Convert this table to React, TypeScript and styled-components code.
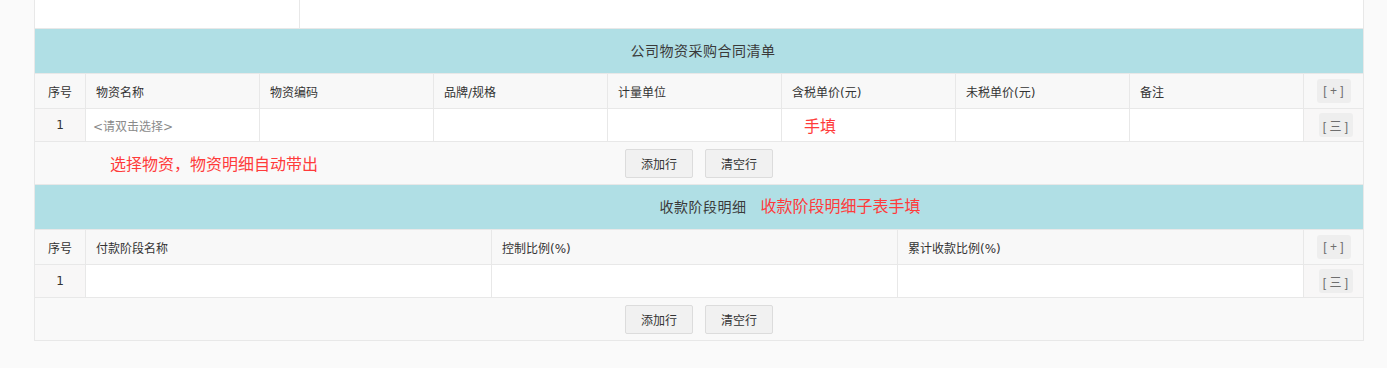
import React from 'react'
import styled, {createGlobalStyle} from 'styled-components'

const GlobalStyle = createGlobalStyle`
  html, body {
    margin: 0;
    padding: 0;
    background: #fafafa;
    font-family: "DejaVu Sans", "Noto Sans CJK SC", sans-serif;
    font-size: 12px;
    color: #333;
  }
  * {
    box-sizing: border-box;
  }
`

const Page = styled.div`
  width: 1387px;
  height: 368px;
  padding-left: 34px;
  background: #fafafa;
`

const Panel = styled.div`
  width: 1330px;
  border-left: 1px solid #e8e8e8;
  border-right: 1px solid #e8e8e8;
  border-bottom: 1px solid #e8e8e8;
  background: #fff;
`

const TopStrip = styled.div`
  display: grid;
  grid-template-columns: 265px 1fr;
  height: 29px;
  border-bottom: 1px solid #e8e8e8;

  > div:first-child {
    border-right: 1px solid #e8e8e8;
  }
`

// the second title sits under a toolbar, so it carries its own divider line
const SectionTitle = styled.div<{ $divided?: boolean }>`
  height: ${p => (p.$divided ? 45 : 44)}px;
  border-top: ${p => (p.$divided ? '1px solid #e8e8e8' : 'none')};
  background: #b0dfe5;
  display: flex;
  align-items: center;
  justify-content: center;
  padding-left: 8px;
  font-size: 14px;
  letter-spacing: 0.5px;
  color: #3a3a3a;
`

const TitleText = styled.span`
  position: relative;
  line-height: 1;
`

const TitleNote = styled.span`
  position: absolute;
  left: calc(100% + 14px);
  top: 50%;
  transform: translateY(-50%);
  white-space: nowrap;
  font-size: 16px;
  letter-spacing: 0;
  color: #ff3b3b;
`

const Row = styled.div<{ $cols: string; $height: number; $head?: boolean }>`
  display: grid;
  grid-template-columns: ${p => p.$cols};
  height: ${p => p.$height}px;
  border-top: 1px solid #e8e8e8;
  background: ${p => (p.$head ? '#f8f8f8' : '#fff')};
`

const Cell = styled.div<{ $center?: boolean; $grey?: boolean; $pad?: number }>`
  display: flex;
  align-items: center;
  justify-content: ${p => (p.$center ? 'center' : 'flex-start')};
  padding-left: ${p => (p.$center ? 0 : p.$pad ?? 10)}px;
  border-right: 1px solid #e8e8e8;
  background: ${p => (p.$grey ? '#f8f7f7' : 'transparent')};
  white-space: nowrap;
  overflow: hidden;

  &:last-child {
    border-right: none;
  }
`

const Placeholder = styled.span`
  color: #8a8a8a;
`

const Hint = styled.span`
  font-size: 16px;
  color: #ff3b3b;
`

const IconButton = styled.span<{ $shift?: number }>`
  display: inline-flex;
  align-items: center;
  justify-content: center;
  width: 34px;
  height: 24px;
  margin-left: ${p => p.$shift ?? 0}px;
  border-radius: 3px;
  background: #eeeeee;
  color: #6e6e6e;
  font-size: 12px;
  font-family: "Liberation Sans", "Noto Sans CJK SC", sans-serif;
  white-space: pre;
`

const Toolbar = styled.div`
  position: relative;
  height: 43px;
  border-top: 1px solid #e8e8e8;
  background: #f9f9f9;
  display: flex;
  align-items: center;
  justify-content: center;
  gap: 12px;
`

const ToolNote = styled.span`
  position: absolute;
  left: 75px;
  top: 50%;
  transform: translateY(-50%);
  font-size: 16px;
  color: #ff3b3b;
`

const Button = styled.button`
  width: 68px;
  height: 29px;
  padding: 0;
  border: 1px solid #dcdcdc;
  border-radius: 2px;
  background: #f1f1f1;
  color: #333;
  font-family: "Noto Sans CJK SC", sans-serif;
  font-size: 12px;
  cursor: pointer;
`

const materialCols = '51px repeat(7, 174px) 1fr'
const payCols = '51px repeat(3, 406px) 1fr'

const materialHeads = ['物资名称', '物资编码', '品牌/规格', '计量单位', '含税单价(元)', '未税单价(元)', '备注']
const payHeads = ['付款阶段名称', '控制比例(%)', '累计收款比例(%)']

const Tools = ({note}: { note?: string }) => (
  <Toolbar>
    {note && <ToolNote>{note}</ToolNote>}
    <Button>添加行</Button>
    <Button>清空行</Button>
  </Toolbar>
)

export default function App() {
  return (
    <Page>
      <GlobalStyle />
      <Panel>
        <TopStrip>
          <div />
          <div />
        </TopStrip>

        <SectionTitle>
          <TitleText>公司物资采购合同清单</TitleText>
        </SectionTitle>
        <Row $cols={materialCols} $height={35} $head>
          <Cell $center>序号</Cell>
          {materialHeads.map(h => (
            <Cell key={h}>{h}</Cell>
          ))}
          <Cell $center>
            <IconButton>{'[ + ]'}</IconButton>
          </Cell>
        </Row>
        <Row $cols={materialCols} $height={33}>
          <Cell $center $grey>1</Cell>
          <Cell $pad={7}>
            <Placeholder>{'<请双击选择>'}</Placeholder>
          </Cell>
          <Cell />
          <Cell />
          <Cell />
          <Cell $pad={22}>
            <Hint>手填</Hint>
          </Cell>
          <Cell />
          <Cell />
          <Cell $center $grey>
            <IconButton $shift={4}>{'[ 三 ]'}</IconButton>
          </Cell>
        </Row>
        <Tools note="选择物资，物资明细自动带出" />

        <SectionTitle $divided>
          <TitleText>
            收款阶段明细
            <TitleNote>收款阶段明细子表手填</TitleNote>
          </TitleText>
        </SectionTitle>
        <Row $cols={payCols} $height={35} $head>
          <Cell $center>序号</Cell>
          {payHeads.map(h => (
            <Cell key={h}>{h}</Cell>
          ))}
          <Cell $center>
            <IconButton>{'[ + ]'}</IconButton>
          </Cell>
        </Row>
        <Row $cols={payCols} $height={33}>
          <Cell $center $grey>1</Cell>
          <Cell />
          <Cell />
          <Cell />
          <Cell $center $grey>
            <IconButton $shift={4}>{'[ 三 ]'}</IconButton>
          </Cell>
        </Row>
        <Tools />
      </Panel>
    </Page>
  )
}
